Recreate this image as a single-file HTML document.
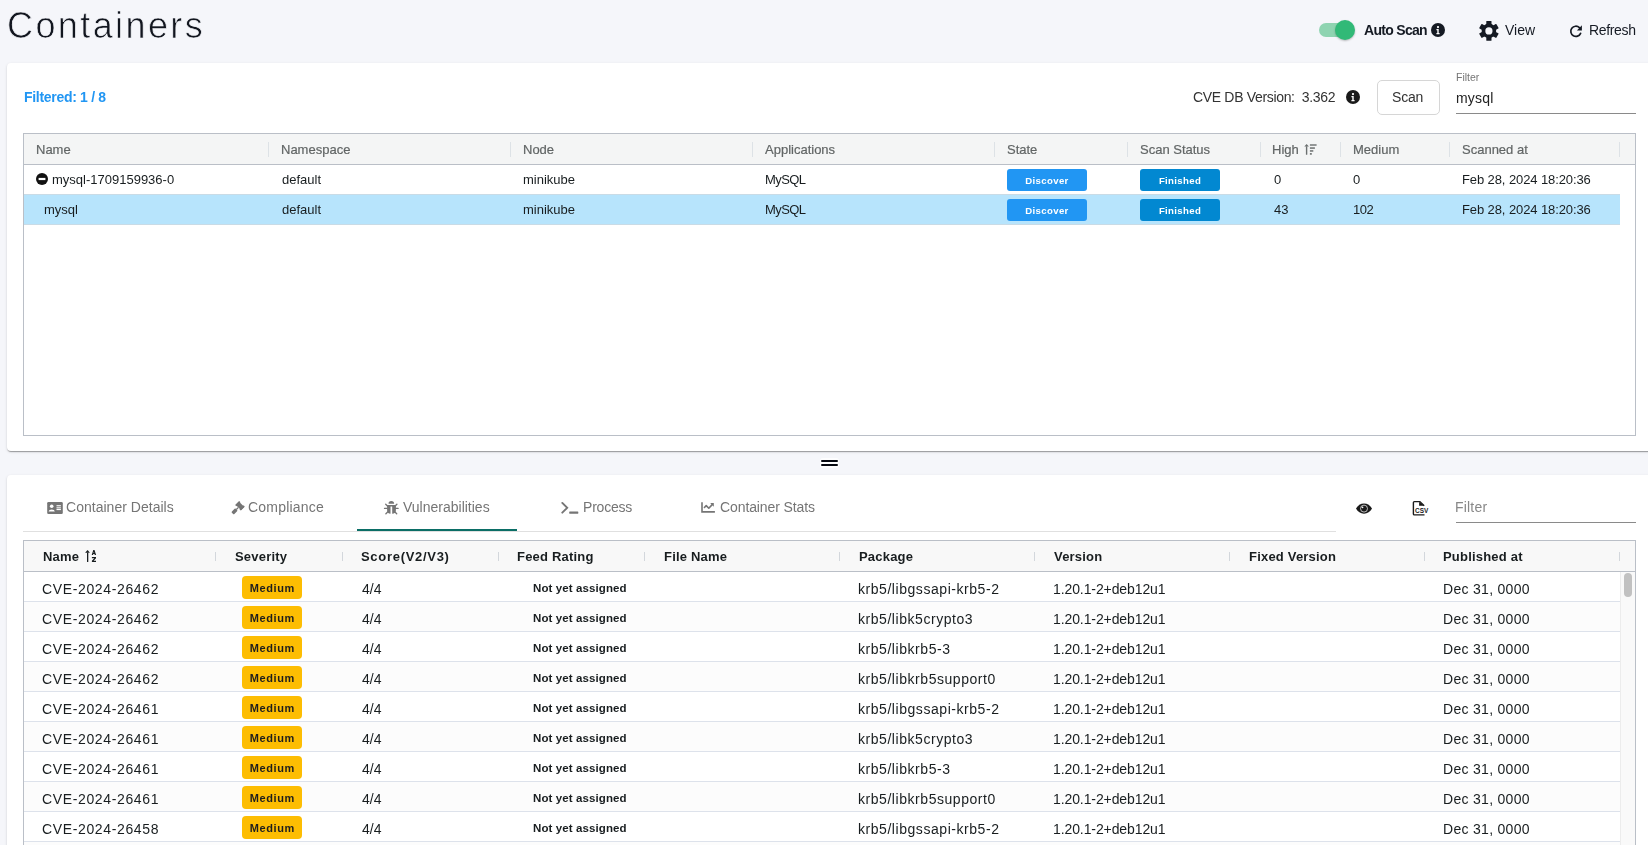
<!DOCTYPE html>
<html><head><meta charset="utf-8"><title>Containers</title>
<style>
html,body{margin:0;padding:0;}
body{width:1648px;height:845px;overflow:hidden;background:#f5f6fa;position:relative;font-family:"Liberation Sans",sans-serif;}
.abs{position:absolute;}
.t{position:absolute;white-space:pre;will-change:transform;}
.card{position:absolute;background:#fff;border-radius:4px;box-shadow:0 2px 1px -1px rgba(0,0,0,.2),0 1px 1px 0 rgba(0,0,0,.14),0 1px 3px 0 rgba(0,0,0,.12);}
.badge{position:absolute;will-change:transform;height:22px;border-radius:3px;color:#fff;font-weight:700;font-size:9.6px;line-height:23px;text-align:center;letter-spacing:0.35px;}
.badge2{position:absolute;will-change:transform;width:60px;height:23px;border-radius:4px;background:#fdbd02;color:#1e1e1e;font-weight:700;font-size:11px;line-height:25px;text-align:center;letter-spacing:0.6px;text-indent:0.6px;}
</style></head><body>
<div class="t" style="left:6.50px;top:7.53px;font-size:36px;line-height:36px;color:#12161f;font-weight:400;letter-spacing:2.4px;-webkit-text-stroke:0.7px #f5f6fa;">Containers</div>
<div class="abs" style="left:1319px;top:23px;width:34px;height:14px;border-radius:7px;background:#8fd4b1"></div>
<div class="abs" style="left:1335px;top:20px;width:20px;height:20px;border-radius:50%;background:#31b977;box-shadow:0 1px 2px rgba(0,0,0,.25)"></div>
<div class="t" style="left:1363.50px;top:22.95px;font-size:14px;line-height:14px;color:#151a23;font-weight:700;letter-spacing:-0.7px;">Auto Scan</div>
<svg class="abs" style="left:1431.00px;top:23.00px" width="14" height="14" viewBox="0 0 16 16"><circle cx="8" cy="8" r="8" fill="#151a23"/><circle cx="8" cy="4.6" r="1.3" fill="#fff"/><path d="M6.2 6.8h2.6v4.6h1v1.4H6.2v-1.4h1v-3.2h-1z" fill="#fff"/></svg>
<svg class="abs" style="left:1474px;top:16px" width="30" height="30" viewBox="0 0 30 30"><g transform="translate(14.9 30.9) translate(0 -16)" fill="#151a23"><circle r="7.3"/><rect x="-2.6" y="-9.9" width="5.2" height="5" rx="0.6"/><rect x="-2.6" y="-9.9" width="5.2" height="5" rx="0.6" transform="rotate(60)"/><rect x="-2.6" y="-9.9" width="5.2" height="5" rx="0.6" transform="rotate(120)"/><rect x="-2.6" y="-9.9" width="5.2" height="5" rx="0.6" transform="rotate(180)"/><rect x="-2.6" y="-9.9" width="5.2" height="5" rx="0.6" transform="rotate(240)"/><rect x="-2.6" y="-9.9" width="5.2" height="5" rx="0.6" transform="rotate(300)"/><circle r="3.6" fill="#f5f6fa"/></g></svg>
<div class="t" style="left:1504.80px;top:22.95px;font-size:14px;line-height:14px;color:#151a23;font-weight:400;letter-spacing:0px;">View</div>
<svg class="abs" style="left:1564px;top:18px" width="24" height="24" viewBox="0 0 24 24"><path d="M15.4 9.6A5.1 5.1 0 1 0 16.6 15.3" stroke="#151a23" stroke-width="1.7" fill="none" stroke-linecap="round"/><path d="M17.9 7.2V12.5H12.9z" fill="#151a23"/></svg>
<div class="t" style="left:1588.80px;top:22.95px;font-size:14px;line-height:14px;color:#151a23;font-weight:400;letter-spacing:-0.35px;">Refresh</div>
<div class="card" style="left:7px;top:63px;width:1660px;height:388px"></div>
<div class="t" style="left:23.70px;top:89.95px;font-size:14px;line-height:14px;color:#2196f3;font-weight:700;letter-spacing:-0.3px;">Filtered: 1 / 8</div>
<div class="t" style="left:1192.70px;top:90.15px;font-size:14px;line-height:14px;color:#333;font-weight:400;letter-spacing:-0.33px;white-space:pre;">CVE DB Version:&nbsp; 3.362</div>
<svg class="abs" style="left:1346.00px;top:90.00px" width="14" height="14" viewBox="0 0 16 16"><circle cx="8" cy="8" r="8" fill="#1a1a1a"/><circle cx="8" cy="4.6" r="1.3" fill="#fff"/><path d="M6.2 6.8h2.6v4.6h1v1.4H6.2v-1.4h1v-3.2h-1z" fill="#fff"/></svg>
<div class="abs" style="left:1376.5px;top:80px;width:61px;height:33px;border:1px solid #d6d6d6;border-radius:5px;background:#fff"></div>
<div class="t" style="left:1391.70px;top:90.15px;font-size:14px;line-height:14px;color:#333;font-weight:400;letter-spacing:-0.2px;">Scan</div>
<div class="t" style="left:1456.40px;top:71.91px;font-size:10.5px;line-height:10.5px;color:#757575;font-weight:400;letter-spacing:0px;">Filter</div>
<div class="t" style="left:1456.00px;top:91.05px;font-size:14px;line-height:14px;color:#222;font-weight:400;letter-spacing:0.2px;">mysql</div>
<div class="abs" style="left:1456px;top:113px;width:180px;height:1px;background:#8a8a8a"></div>
<div class="abs" style="left:23px;top:133px;width:1611px;height:301px;border:1px solid #babfc7;background:#fff"></div>
<div class="abs" style="left:24px;top:134px;width:1611px;height:30px;background:#f4f5f5"></div>
<div class="abs" style="left:24px;top:164px;width:1611px;height:1px;background:#babfc7"></div>
<div class="t" style="left:35.80px;top:142.80px;font-size:13px;line-height:13px;color:#616565;font-weight:400;letter-spacing:0px;-webkit-text-stroke:0.2px #616565;">Name</div>
<div class="t" style="left:281.20px;top:142.80px;font-size:13px;line-height:13px;color:#616565;font-weight:400;letter-spacing:0px;-webkit-text-stroke:0.2px #616565;">Namespace</div>
<div class="t" style="left:522.50px;top:142.80px;font-size:13px;line-height:13px;color:#616565;font-weight:400;letter-spacing:0px;-webkit-text-stroke:0.2px #616565;">Node</div>
<div class="t" style="left:765.00px;top:142.80px;font-size:13px;line-height:13px;color:#616565;font-weight:400;letter-spacing:0px;-webkit-text-stroke:0.2px #616565;">Applications</div>
<div class="t" style="left:1006.50px;top:142.80px;font-size:13px;line-height:13px;color:#616565;font-weight:400;letter-spacing:0px;-webkit-text-stroke:0.2px #616565;">State</div>
<div class="t" style="left:1139.80px;top:142.80px;font-size:13px;line-height:13px;color:#616565;font-weight:400;letter-spacing:0px;-webkit-text-stroke:0.2px #616565;">Scan Status</div>
<div class="t" style="left:1272.00px;top:142.80px;font-size:13px;line-height:13px;color:#616565;font-weight:400;letter-spacing:0px;-webkit-text-stroke:0.2px #616565;">High</div>
<div class="t" style="left:1352.50px;top:142.80px;font-size:13px;line-height:13px;color:#616565;font-weight:400;letter-spacing:0px;-webkit-text-stroke:0.2px #616565;">Medium</div>
<div class="t" style="left:1461.70px;top:142.80px;font-size:13px;line-height:13px;color:#616565;font-weight:400;letter-spacing:0px;-webkit-text-stroke:0.2px #616565;">Scanned at</div>
<div class="abs" style="left:268px;top:142px;width:1px;height:15px;background:#dde2e6"></div>
<div class="abs" style="left:510px;top:142px;width:1px;height:15px;background:#dde2e6"></div>
<div class="abs" style="left:752px;top:142px;width:1px;height:15px;background:#dde2e6"></div>
<div class="abs" style="left:994px;top:142px;width:1px;height:15px;background:#dde2e6"></div>
<div class="abs" style="left:1127px;top:142px;width:1px;height:15px;background:#dde2e6"></div>
<div class="abs" style="left:1260px;top:142px;width:1px;height:15px;background:#dde2e6"></div>
<div class="abs" style="left:1340px;top:142px;width:1px;height:15px;background:#dde2e6"></div>
<div class="abs" style="left:1449px;top:142px;width:1px;height:15px;background:#dde2e6"></div>
<div class="abs" style="left:1619px;top:142px;width:1px;height:15px;background:#dde2e6"></div>
<svg class="abs" style="left:1300px;top:140px" width="20" height="20" viewBox="0 0 20 20"><g fill="#6b6f6f"><path d="M4.3 6.6L6.6 4L8.9 6.6Z"/><rect x="5.9" y="6.3" width="1.4" height="8.4" rx="0.5"/><rect x="9.9" y="4.3" width="6.7" height="1.4"/><rect x="9.9" y="7.3" width="5" height="1.5"/><rect x="9.9" y="10.2" width="3.4" height="1.5"/><rect x="9.9" y="13.1" width="1.9" height="1.6"/></g></svg>
<div class="abs" style="left:24px;top:194px;width:1596px;height:30.5px;background:#b7e4fc;border-top:1px solid #c9dbe6;border-bottom:1px solid #c9dbe6;box-sizing:border-box"></div>
<svg class="abs" style="left:36px;top:173.2px" width="12" height="12" viewBox="0 0 12 12"><circle cx="6" cy="6" r="6" fill="#111"/><rect x="2.6" y="4.9" width="6.8" height="2.2" fill="#fff"/></svg>
<div class="t" style="left:51.60px;top:172.80px;font-size:13px;line-height:13px;color:#181d1f;font-weight:400;letter-spacing:0px;">mysql-1709159936-0</div>
<div class="t" style="left:282.00px;top:172.80px;font-size:13px;line-height:13px;color:#181d1f;font-weight:400;letter-spacing:0px;">default</div>
<div class="t" style="left:523.30px;top:172.80px;font-size:13px;line-height:13px;color:#181d1f;font-weight:400;letter-spacing:0px;">minikube</div>
<div class="t" style="left:764.80px;top:172.80px;font-size:13px;line-height:13px;color:#181d1f;font-weight:400;letter-spacing:-0.6px;">MySQL</div>
<div class="badge" style="left:1007px;top:168.7px;width:80px;background:#2196f3">Discover</div>
<div class="badge" style="left:1140px;top:168.7px;width:80px;background:#0288d1">Finished</div>
<div class="t" style="left:1273.80px;top:172.80px;font-size:13px;line-height:13px;color:#181d1f;font-weight:400;letter-spacing:0px;">0</div>
<div class="t" style="left:1353.30px;top:172.80px;font-size:13px;line-height:13px;color:#181d1f;font-weight:400;letter-spacing:0px;">0</div>
<div class="t" style="left:1461.50px;top:172.80px;font-size:13px;line-height:13px;color:#181d1f;font-weight:400;letter-spacing:-0.1px;">Feb 28, 2024 18:20:36</div>
<div class="t" style="left:43.70px;top:202.80px;font-size:13px;line-height:13px;color:#181d1f;font-weight:400;letter-spacing:0px;">mysql</div>
<div class="t" style="left:282.00px;top:202.80px;font-size:13px;line-height:13px;color:#181d1f;font-weight:400;letter-spacing:0px;">default</div>
<div class="t" style="left:523.30px;top:202.80px;font-size:13px;line-height:13px;color:#181d1f;font-weight:400;letter-spacing:0px;">minikube</div>
<div class="t" style="left:764.80px;top:202.80px;font-size:13px;line-height:13px;color:#181d1f;font-weight:400;letter-spacing:-0.6px;">MySQL</div>
<div class="badge" style="left:1007px;top:198.7px;width:80px;background:#2196f3">Discover</div>
<div class="badge" style="left:1140px;top:198.7px;width:80px;background:#0288d1">Finished</div>
<div class="t" style="left:1273.80px;top:202.80px;font-size:13px;line-height:13px;color:#181d1f;font-weight:400;letter-spacing:0px;">43</div>
<div class="t" style="left:1353.30px;top:202.80px;font-size:13px;line-height:13px;color:#181d1f;font-weight:400;letter-spacing:-0.5px;">102</div>
<div class="t" style="left:1461.50px;top:202.80px;font-size:13px;line-height:13px;color:#181d1f;font-weight:400;letter-spacing:-0.1px;">Feb 28, 2024 18:20:36</div>
<div class="abs" style="left:820px;top:458px;width:19px;height:10px;background:#fff;border-radius:3px;opacity:.8"></div>
<div class="abs" style="left:821px;top:460px;width:17px;height:2px;border-radius:1px;background:#050810"></div>
<div class="abs" style="left:821px;top:464px;width:17px;height:2px;border-radius:1px;background:#050810"></div>
<div class="card" style="left:7px;top:475px;width:1660px;height:420px"></div>
<svg class="abs" style="left:47.3px;top:501.7px" width="16" height="12" viewBox="0 0 15.6 12"><rect x="0" y="0" width="15.6" height="12" rx="1.3" fill="#757575"/><circle cx="4.5" cy="4.2" r="1.8" fill="#fff"/><path d="M1.4 9.4Q1.6 7.4 4.5 7.4Q7.4 7.4 7.6 9.4Z" fill="#fff"/><rect x="9.3" y="3.2" width="4.4" height="1.1" fill="#fff"/><rect x="9.3" y="5.3" width="4.4" height="1.1" fill="#fff"/><rect x="9.3" y="7.0" width="4.4" height="1.1" fill="#fff"/></svg>
<div class="t" style="left:66.00px;top:500.15px;font-size:14px;line-height:14px;color:#757575;font-weight:400;letter-spacing:0.02px;">Container Details</div>
<svg class="abs" style="left:226px;top:496px" width="24" height="24" viewBox="0 0 24 24"><g transform="translate(14 9.8) rotate(45)" fill="#757575"><rect x="-3.9" y="-2.3" width="7.8" height="4.6"/><rect x="-3.9" y="-2.9" width="1.7" height="5.8" rx="0.4"/><rect x="2.2" y="-2.9" width="1.7" height="5.8" rx="0.4"/><rect x="-0.65" y="2.2" width="1.3" height="3"/><rect x="-1.75" y="5" width="3.5" height="5.6" rx="0.9"/></g></svg>
<div class="t" style="left:248.40px;top:500.15px;font-size:14px;line-height:14px;color:#757575;font-weight:400;letter-spacing:0.2px;">Compliance</div>
<svg class="abs" style="left:380px;top:496px" width="24" height="24" viewBox="0 0 24 24"><g fill="#757575"><path d="M8.5 7.7A2.8 2.7 0 0 1 14.1 7.7Z"/><path d="M7.1 9.1H15.9V14.3Q15.9 17.6 12.2 17.7V10.5H10.5V17.7Q7.1 17.6 7.1 14.3Z"/></g><g stroke="#757575" stroke-width="1.3" stroke-linecap="round"><path d="M5.7 8.2L7.7 10.2M16.9 8.2L14.9 10.2M4.5 12.4H7.3M18.1 12.4H15.5M5.9 17.8L7.9 15.8M16.7 17.8L14.7 15.8"/></g></svg>
<div class="t" style="left:403.00px;top:500.15px;font-size:14px;line-height:14px;color:#757575;font-weight:400;letter-spacing:0px;">Vulnerabilities</div>
<svg class="abs" style="left:556px;top:496px" width="24" height="24" viewBox="0 0 24 24"><path d="M6.3 6.9L11.2 11.8L6.3 16.7" stroke="#757575" stroke-width="1.9" fill="none" stroke-linecap="round"/><rect x="13.2" y="15.6" width="9.1" height="2.1" rx="0.4" fill="#757575"/></svg>
<div class="t" style="left:583.10px;top:500.15px;font-size:14px;line-height:14px;color:#757575;font-weight:400;letter-spacing:-0.2px;">Process</div>
<svg class="abs" style="left:696px;top:496px" width="24" height="24" viewBox="0 0 24 24"><path d="M6 6.3V15.9H18.9" stroke="#757575" stroke-width="1.6" fill="none"/><path d="M8.4 11.5L10.2 9.6L12.8 12.2L16.2 8.6" stroke="#757575" stroke-width="1.6" fill="none" stroke-linecap="round" stroke-linejoin="round"/><path d="M14.2 7.1H17.8V10.8z" fill="#757575"/></svg>
<div class="t" style="left:719.60px;top:500.15px;font-size:14px;line-height:14px;color:#757575;font-weight:400;letter-spacing:-0.1px;">Container Stats</div>
<div class="abs" style="left:23px;top:531px;width:1313px;height:1px;background:#e0e0e0"></div>
<div class="abs" style="left:357px;top:529px;width:160px;height:2px;background:#0b6e66"></div>
<svg class="abs" style="left:1352px;top:496px" width="24" height="24" viewBox="0 0 24 24"><path d="M4 12.6C5.8 9.3 8.6 7.5 12 7.5S18.2 9.3 20 12.6C18.2 15.9 15.4 17.8 12 17.8S5.8 15.9 4 12.6Z" fill="#1a1a1a"/><circle cx="12" cy="12.6" r="3.5" fill="none" stroke="#fff" stroke-width="0.7"/><circle cx="10.5" cy="11.3" r="0.9" fill="#fff"/></svg>
<svg class="abs" style="left:1408px;top:496px" width="24" height="24" viewBox="0 0 24 24"><path d="M16.5 18.9H6.4Q5.4 18.9 5.4 17.9V6.6Q5.4 5.6 6.4 5.6H11.9L16.2 9.7" stroke="#1a1a1a" stroke-width="1.4" fill="none"/><path d="M11.1 5.7L16 9.7H11.1Z" fill="#1a1a1a"/><text x="7.1" y="16.8" font-family="Liberation Sans" font-weight="700" font-size="6.45" fill="#1a1a1a">CSV</text></svg>
<div class="t" style="left:1455.40px;top:500.15px;font-size:14px;line-height:14px;color:#888;font-weight:400;letter-spacing:0.2px;">Filter</div>
<div class="abs" style="left:1456px;top:522px;width:180px;height:1px;background:#8a8a8a"></div>
<div class="abs" style="left:23px;top:540px;width:1611px;height:400px;border:1px solid #babfc7;background:#fff"></div>
<div class="abs" style="left:24px;top:541px;width:1611px;height:30px;background:#f8f8f8"></div>
<div class="abs" style="left:24px;top:571px;width:1611px;height:1px;background:#babfc7"></div>
<div class="t" style="left:42.70px;top:550.20px;font-size:13px;line-height:13px;color:#181d1f;font-weight:700;letter-spacing:0.2px;">Name</div>
<div class="t" style="left:234.60px;top:550.20px;font-size:13px;line-height:13px;color:#181d1f;font-weight:700;letter-spacing:0.2px;">Severity</div>
<div class="t" style="left:360.70px;top:550.20px;font-size:13px;line-height:13px;color:#181d1f;font-weight:700;letter-spacing:0.7px;">Score(V2/V3)</div>
<div class="t" style="left:517.40px;top:550.20px;font-size:13px;line-height:13px;color:#181d1f;font-weight:700;letter-spacing:0.2px;">Feed Rating</div>
<div class="t" style="left:663.50px;top:550.20px;font-size:13px;line-height:13px;color:#181d1f;font-weight:700;letter-spacing:0.2px;">File Name</div>
<div class="t" style="left:858.60px;top:550.20px;font-size:13px;line-height:13px;color:#181d1f;font-weight:700;letter-spacing:0.2px;">Package</div>
<div class="t" style="left:1053.50px;top:550.20px;font-size:13px;line-height:13px;color:#181d1f;font-weight:700;letter-spacing:0.2px;">Version</div>
<div class="t" style="left:1248.60px;top:550.20px;font-size:13px;line-height:13px;color:#181d1f;font-weight:700;letter-spacing:0.2px;">Fixed Version</div>
<div class="t" style="left:1443.40px;top:550.20px;font-size:13px;line-height:13px;color:#181d1f;font-weight:700;letter-spacing:0.2px;">Published at</div>
<div class="abs" style="left:215px;top:552px;width:1px;height:9px;background:#d3d7dc"></div>
<div class="abs" style="left:342px;top:552px;width:1px;height:9px;background:#d3d7dc"></div>
<div class="abs" style="left:498px;top:552px;width:1px;height:9px;background:#d3d7dc"></div>
<div class="abs" style="left:644px;top:552px;width:1px;height:9px;background:#d3d7dc"></div>
<div class="abs" style="left:839px;top:552px;width:1px;height:9px;background:#d3d7dc"></div>
<div class="abs" style="left:1034px;top:552px;width:1px;height:9px;background:#d3d7dc"></div>
<div class="abs" style="left:1229px;top:552px;width:1px;height:9px;background:#d3d7dc"></div>
<div class="abs" style="left:1424px;top:552px;width:1px;height:9px;background:#d3d7dc"></div>
<div class="abs" style="left:1619px;top:552px;width:1px;height:9px;background:#d3d7dc"></div>
<svg class="abs" style="left:82px;top:546px" width="20" height="20" viewBox="0 0 20 20"><g fill="#181d1f"><path d="M3.1 6.7L5.6 4.1L7.9 6.7Z"/><rect x="5" y="6.4" width="1.3" height="9.5" rx="0.5"/><path d="M9.7 9L11.3 4.1H12.5L14.1 9H12.8L12.5 8H11.3L11 9ZM11.6 7H12.2L11.9 5.8Z"/><path d="M9.9 11.1H14V12.3L11.6 14.8H14V15.9H9.9V14.7L12.3 12.2H9.9Z"/></g></svg>
<div class="abs" style="left:1620px;top:572px;width:15px;height:280px;background:#f9f9f9;border-left:1px solid #ececec;box-sizing:border-box"></div>
<div class="abs" style="left:1624px;top:573px;width:8px;height:24px;border-radius:4px;background:#c1c1c1"></div>
<div class="abs" style="left:24px;top:572px;width:1596px;height:30px;background:#fff;border-bottom:1px solid #dde2eb;box-sizing:border-box"></div>
<div class="t" style="left:42.30px;top:581.95px;font-size:14px;line-height:14px;color:#181d1f;font-weight:400;letter-spacing:0.64px;">CVE-2024-26462</div>
<div class="badge2" style="left:242px;top:576.3px">Medium</div>
<div class="t" style="left:361.70px;top:581.95px;font-size:14px;line-height:14px;color:#181d1f;font-weight:400;letter-spacing:0px;">4/4</div>
<div class="t" style="left:532.50px;top:583.27px;font-size:11.5px;line-height:11.5px;color:#181d1f;font-weight:700;letter-spacing:0.1px;">Not yet assigned</div>
<div class="t" style="left:857.60px;top:581.95px;font-size:14px;line-height:14px;color:#181d1f;font-weight:400;letter-spacing:0.55px;">krb5/libgssapi-krb5-2</div>
<div class="t" style="left:1052.50px;top:581.95px;font-size:14px;line-height:14px;color:#181d1f;font-weight:400;letter-spacing:-0.1px;">1.20.1-2+deb12u1</div>
<div class="t" style="left:1443.40px;top:581.95px;font-size:14px;line-height:14px;color:#181d1f;font-weight:400;letter-spacing:0.3px;">Dec 31, 0000</div>
<div class="abs" style="left:24px;top:602px;width:1596px;height:30px;background:#fcfcfc;border-bottom:1px solid #dde2eb;box-sizing:border-box"></div>
<div class="t" style="left:42.30px;top:611.95px;font-size:14px;line-height:14px;color:#181d1f;font-weight:400;letter-spacing:0.64px;">CVE-2024-26462</div>
<div class="badge2" style="left:242px;top:606.3px">Medium</div>
<div class="t" style="left:361.70px;top:611.95px;font-size:14px;line-height:14px;color:#181d1f;font-weight:400;letter-spacing:0px;">4/4</div>
<div class="t" style="left:532.50px;top:613.27px;font-size:11.5px;line-height:11.5px;color:#181d1f;font-weight:700;letter-spacing:0.1px;">Not yet assigned</div>
<div class="t" style="left:857.60px;top:611.95px;font-size:14px;line-height:14px;color:#181d1f;font-weight:400;letter-spacing:0.55px;">krb5/libk5crypto3</div>
<div class="t" style="left:1052.50px;top:611.95px;font-size:14px;line-height:14px;color:#181d1f;font-weight:400;letter-spacing:-0.1px;">1.20.1-2+deb12u1</div>
<div class="t" style="left:1443.40px;top:611.95px;font-size:14px;line-height:14px;color:#181d1f;font-weight:400;letter-spacing:0.3px;">Dec 31, 0000</div>
<div class="abs" style="left:24px;top:632px;width:1596px;height:30px;background:#fff;border-bottom:1px solid #dde2eb;box-sizing:border-box"></div>
<div class="t" style="left:42.30px;top:641.95px;font-size:14px;line-height:14px;color:#181d1f;font-weight:400;letter-spacing:0.64px;">CVE-2024-26462</div>
<div class="badge2" style="left:242px;top:636.3px">Medium</div>
<div class="t" style="left:361.70px;top:641.95px;font-size:14px;line-height:14px;color:#181d1f;font-weight:400;letter-spacing:0px;">4/4</div>
<div class="t" style="left:532.50px;top:643.27px;font-size:11.5px;line-height:11.5px;color:#181d1f;font-weight:700;letter-spacing:0.1px;">Not yet assigned</div>
<div class="t" style="left:857.60px;top:641.95px;font-size:14px;line-height:14px;color:#181d1f;font-weight:400;letter-spacing:0.55px;">krb5/libkrb5-3</div>
<div class="t" style="left:1052.50px;top:641.95px;font-size:14px;line-height:14px;color:#181d1f;font-weight:400;letter-spacing:-0.1px;">1.20.1-2+deb12u1</div>
<div class="t" style="left:1443.40px;top:641.95px;font-size:14px;line-height:14px;color:#181d1f;font-weight:400;letter-spacing:0.3px;">Dec 31, 0000</div>
<div class="abs" style="left:24px;top:662px;width:1596px;height:30px;background:#fcfcfc;border-bottom:1px solid #dde2eb;box-sizing:border-box"></div>
<div class="t" style="left:42.30px;top:671.95px;font-size:14px;line-height:14px;color:#181d1f;font-weight:400;letter-spacing:0.64px;">CVE-2024-26462</div>
<div class="badge2" style="left:242px;top:666.3px">Medium</div>
<div class="t" style="left:361.70px;top:671.95px;font-size:14px;line-height:14px;color:#181d1f;font-weight:400;letter-spacing:0px;">4/4</div>
<div class="t" style="left:532.50px;top:673.27px;font-size:11.5px;line-height:11.5px;color:#181d1f;font-weight:700;letter-spacing:0.1px;">Not yet assigned</div>
<div class="t" style="left:857.60px;top:671.95px;font-size:14px;line-height:14px;color:#181d1f;font-weight:400;letter-spacing:0.55px;">krb5/libkrb5support0</div>
<div class="t" style="left:1052.50px;top:671.95px;font-size:14px;line-height:14px;color:#181d1f;font-weight:400;letter-spacing:-0.1px;">1.20.1-2+deb12u1</div>
<div class="t" style="left:1443.40px;top:671.95px;font-size:14px;line-height:14px;color:#181d1f;font-weight:400;letter-spacing:0.3px;">Dec 31, 0000</div>
<div class="abs" style="left:24px;top:692px;width:1596px;height:30px;background:#fff;border-bottom:1px solid #dde2eb;box-sizing:border-box"></div>
<div class="t" style="left:42.30px;top:701.95px;font-size:14px;line-height:14px;color:#181d1f;font-weight:400;letter-spacing:0.64px;">CVE-2024-26461</div>
<div class="badge2" style="left:242px;top:696.3px">Medium</div>
<div class="t" style="left:361.70px;top:701.95px;font-size:14px;line-height:14px;color:#181d1f;font-weight:400;letter-spacing:0px;">4/4</div>
<div class="t" style="left:532.50px;top:703.27px;font-size:11.5px;line-height:11.5px;color:#181d1f;font-weight:700;letter-spacing:0.1px;">Not yet assigned</div>
<div class="t" style="left:857.60px;top:701.95px;font-size:14px;line-height:14px;color:#181d1f;font-weight:400;letter-spacing:0.55px;">krb5/libgssapi-krb5-2</div>
<div class="t" style="left:1052.50px;top:701.95px;font-size:14px;line-height:14px;color:#181d1f;font-weight:400;letter-spacing:-0.1px;">1.20.1-2+deb12u1</div>
<div class="t" style="left:1443.40px;top:701.95px;font-size:14px;line-height:14px;color:#181d1f;font-weight:400;letter-spacing:0.3px;">Dec 31, 0000</div>
<div class="abs" style="left:24px;top:722px;width:1596px;height:30px;background:#fcfcfc;border-bottom:1px solid #dde2eb;box-sizing:border-box"></div>
<div class="t" style="left:42.30px;top:731.95px;font-size:14px;line-height:14px;color:#181d1f;font-weight:400;letter-spacing:0.64px;">CVE-2024-26461</div>
<div class="badge2" style="left:242px;top:726.3px">Medium</div>
<div class="t" style="left:361.70px;top:731.95px;font-size:14px;line-height:14px;color:#181d1f;font-weight:400;letter-spacing:0px;">4/4</div>
<div class="t" style="left:532.50px;top:733.27px;font-size:11.5px;line-height:11.5px;color:#181d1f;font-weight:700;letter-spacing:0.1px;">Not yet assigned</div>
<div class="t" style="left:857.60px;top:731.95px;font-size:14px;line-height:14px;color:#181d1f;font-weight:400;letter-spacing:0.55px;">krb5/libk5crypto3</div>
<div class="t" style="left:1052.50px;top:731.95px;font-size:14px;line-height:14px;color:#181d1f;font-weight:400;letter-spacing:-0.1px;">1.20.1-2+deb12u1</div>
<div class="t" style="left:1443.40px;top:731.95px;font-size:14px;line-height:14px;color:#181d1f;font-weight:400;letter-spacing:0.3px;">Dec 31, 0000</div>
<div class="abs" style="left:24px;top:752px;width:1596px;height:30px;background:#fff;border-bottom:1px solid #dde2eb;box-sizing:border-box"></div>
<div class="t" style="left:42.30px;top:761.95px;font-size:14px;line-height:14px;color:#181d1f;font-weight:400;letter-spacing:0.64px;">CVE-2024-26461</div>
<div class="badge2" style="left:242px;top:756.3px">Medium</div>
<div class="t" style="left:361.70px;top:761.95px;font-size:14px;line-height:14px;color:#181d1f;font-weight:400;letter-spacing:0px;">4/4</div>
<div class="t" style="left:532.50px;top:763.27px;font-size:11.5px;line-height:11.5px;color:#181d1f;font-weight:700;letter-spacing:0.1px;">Not yet assigned</div>
<div class="t" style="left:857.60px;top:761.95px;font-size:14px;line-height:14px;color:#181d1f;font-weight:400;letter-spacing:0.55px;">krb5/libkrb5-3</div>
<div class="t" style="left:1052.50px;top:761.95px;font-size:14px;line-height:14px;color:#181d1f;font-weight:400;letter-spacing:-0.1px;">1.20.1-2+deb12u1</div>
<div class="t" style="left:1443.40px;top:761.95px;font-size:14px;line-height:14px;color:#181d1f;font-weight:400;letter-spacing:0.3px;">Dec 31, 0000</div>
<div class="abs" style="left:24px;top:782px;width:1596px;height:30px;background:#fcfcfc;border-bottom:1px solid #dde2eb;box-sizing:border-box"></div>
<div class="t" style="left:42.30px;top:791.95px;font-size:14px;line-height:14px;color:#181d1f;font-weight:400;letter-spacing:0.64px;">CVE-2024-26461</div>
<div class="badge2" style="left:242px;top:786.3px">Medium</div>
<div class="t" style="left:361.70px;top:791.95px;font-size:14px;line-height:14px;color:#181d1f;font-weight:400;letter-spacing:0px;">4/4</div>
<div class="t" style="left:532.50px;top:793.27px;font-size:11.5px;line-height:11.5px;color:#181d1f;font-weight:700;letter-spacing:0.1px;">Not yet assigned</div>
<div class="t" style="left:857.60px;top:791.95px;font-size:14px;line-height:14px;color:#181d1f;font-weight:400;letter-spacing:0.55px;">krb5/libkrb5support0</div>
<div class="t" style="left:1052.50px;top:791.95px;font-size:14px;line-height:14px;color:#181d1f;font-weight:400;letter-spacing:-0.1px;">1.20.1-2+deb12u1</div>
<div class="t" style="left:1443.40px;top:791.95px;font-size:14px;line-height:14px;color:#181d1f;font-weight:400;letter-spacing:0.3px;">Dec 31, 0000</div>
<div class="abs" style="left:24px;top:812px;width:1596px;height:30px;background:#fff;border-bottom:1px solid #dde2eb;box-sizing:border-box"></div>
<div class="t" style="left:42.30px;top:821.95px;font-size:14px;line-height:14px;color:#181d1f;font-weight:400;letter-spacing:0.64px;">CVE-2024-26458</div>
<div class="badge2" style="left:242px;top:816.3px">Medium</div>
<div class="t" style="left:361.70px;top:821.95px;font-size:14px;line-height:14px;color:#181d1f;font-weight:400;letter-spacing:0px;">4/4</div>
<div class="t" style="left:532.50px;top:823.27px;font-size:11.5px;line-height:11.5px;color:#181d1f;font-weight:700;letter-spacing:0.1px;">Not yet assigned</div>
<div class="t" style="left:857.60px;top:821.95px;font-size:14px;line-height:14px;color:#181d1f;font-weight:400;letter-spacing:0.55px;">krb5/libgssapi-krb5-2</div>
<div class="t" style="left:1052.50px;top:821.95px;font-size:14px;line-height:14px;color:#181d1f;font-weight:400;letter-spacing:-0.1px;">1.20.1-2+deb12u1</div>
<div class="t" style="left:1443.40px;top:821.95px;font-size:14px;line-height:14px;color:#181d1f;font-weight:400;letter-spacing:0.3px;">Dec 31, 0000</div>
<div class="abs" style="left:24px;top:842px;width:1596px;height:30px;background:#fcfcfc;border-bottom:1px solid #dde2eb;box-sizing:border-box"></div>
<div class="t" style="left:42.30px;top:851.95px;font-size:14px;line-height:14px;color:#181d1f;font-weight:400;letter-spacing:0.64px;">CVE-2024-26458</div>
<div class="badge2" style="left:242px;top:846.3px">Medium</div>
<div class="t" style="left:361.70px;top:851.95px;font-size:14px;line-height:14px;color:#181d1f;font-weight:400;letter-spacing:0px;">4/4</div>
<div class="t" style="left:532.50px;top:853.27px;font-size:11.5px;line-height:11.5px;color:#181d1f;font-weight:700;letter-spacing:0.1px;">Not yet assigned</div>
<div class="t" style="left:857.60px;top:851.95px;font-size:14px;line-height:14px;color:#181d1f;font-weight:400;letter-spacing:0.55px;">krb5/libk5crypto3</div>
<div class="t" style="left:1052.50px;top:851.95px;font-size:14px;line-height:14px;color:#181d1f;font-weight:400;letter-spacing:-0.1px;">1.20.1-2+deb12u1</div>
<div class="t" style="left:1443.40px;top:851.95px;font-size:14px;line-height:14px;color:#181d1f;font-weight:400;letter-spacing:0.3px;">Dec 31, 0000</div>
</body></html>
